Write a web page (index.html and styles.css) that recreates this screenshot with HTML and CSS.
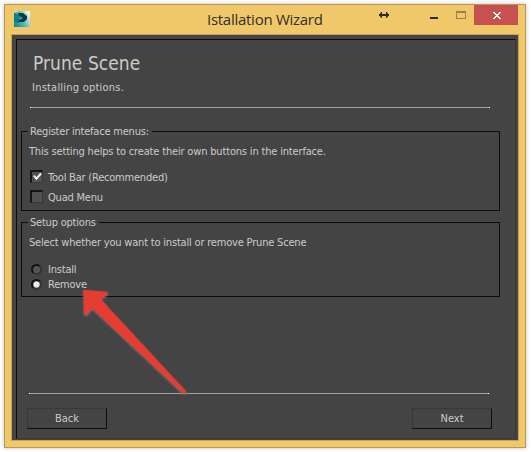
FILE: index.html
```html
<!DOCTYPE html>
<html lang="en">
<head>
<meta charset="utf-8">
<title>Istallation Wizard</title>
<link rel="stylesheet" href="styles.css">
</head>
<body>
<div class="window">
  <header class="titlebar">
    <svg class="app-icon" width="16" height="16" viewBox="0 0 16 16">
      <defs><linearGradient id="g" x1="0" y1="0.8" x2="1" y2="0.3"><stop offset="0" stop-color="#078d90"/><stop offset=".55" stop-color="#67b9ba"/><stop offset="1" stop-color="#e5f1ef"/></linearGradient></defs>
      <path fill="url(#g)" d="M0 0h16v16H0z"/>
      <path fill="#087f83" d="M0 2l5 2v8l-5-1z"/>
      <path fill="#edf6f4" d="M0 0h5L0 2zM10 0h6v5z" opacity=".7"/>
      <path fill="#073b40" d="M4 2h5l4 3v3l-3 3H5V9l4-2-4-2z"/>
      <path fill="#218d90" d="M5 5l3 1.5L5 8z"/>
    </svg>
    <h1 class="caption">Istallation Wizard</h1>
    <svg class="controls" width="148" height="20" viewBox="370 5 148 20" shape-rendering="crispEdges">
      <path fill="#c75050" d="M474 5h45v20h-45z"/>
      <path fill="#2b2b26" d="M379 14h10v2h-10zM380 13h2v4h-2zM381 12h1v6h-1zM386 13h2v4h-2zM386 12h1v6h-1zM430 17h8v2h-8z"/>
      <path fill="#9a824b" fill-rule="evenodd" d="M456 11h10v8h-10zM457 13v5h8v-5z"/>
      <path fill="#fff" d="M493 12h2v1h1v1h2v-1h1v-1h2v1h-1v1h-1v1h-1v1h1v1h1v1h1v1h-2v-1h-1v-1h-2v1h-1v1h-2v-1h1v-1h1v-1h1v-1h-1v-1h-1v-1h-1z"/>
    </svg>
  </header>
  <div class="client">
    <main class="panel">
      <h2 class="heading">Prune Scene</h2>
      <p class="subheading">Installing options.</p>
      <div class="rule"></div>
      <section class="group group-menus">
        <h3 class="legend">Register inteface menus:</h3>
        <p class="desc">This setting helps to create their own buttons in the interface.</p>
        <div class="option check-row">
          <span class="check"><svg width="9" height="9" viewBox="0 0 9 9"><path d="M1 3.7l2.4 3L8 1.5" fill="none" stroke="#f2f2f2" stroke-width="2"/></svg></span>
          <span class="label">Tool Bar (Recommended)</span>
        </div>
        <div class="option check-row"><span class="check"></span><span class="label">Quad Menu</span></div>
      </section>
      <section class="group group-setup">
        <h3 class="legend">Setup options</h3>
        <p class="desc">Select whether you want to install or remove Prune Scene</p>
        <div class="option radio-row"><span class="radio"></span><span>Install</span></div>
        <div class="option radio-row"><span class="radio selected"></span><span>Remove</span></div>
      </section>
      <footer class="footer">
        <div class="rule"></div>
        <div class="actions">
          <button class="button">Back</button>
          <button class="button">Next</button>
        </div>
      </footer>
    </main>
  </div>
  <svg class="arrow" width="110" height="112" viewBox="80 286 110 112">
    <path class="arrow-shape" d="M83.3 290.6Q83.2 289.8 84.5 289.9L106.7 291.8Q108.7 292.5 107.5 294.3L101 299.5L185.6 390.8Q186.7 393 184.9 393.8Q183.8 394 182.5 393L92.2 308.5L87.5 314.5Q85 316.2 84.2 313.5Z"/>
  </svg>
</div>
</body>
</html>
```
FILE: styles.css
```css
* { box-sizing: border-box; }
body {
  margin: 0;
  width: 531px;
  height: 452px;
  padding: 4px;
  overflow: hidden;
  background: #fff;
  color: #cbcbcb;
  font: 11px/14px "DejaVu Sans Condensed", "DejaVu Sans", sans-serif;
  letter-spacing: -.21px;
}
h1, h2, h3, p { margin: 0; font-weight: normal; white-space: nowrap; }
span { white-space: nowrap; }
.window {
  position: relative;
  width: 522px;
  height: 444px;
  padding: 0 6px 6px;
  border: 1px solid #b99a54;
  background: #f0c869;
  box-shadow: 0 0 4px rgba(0, 0, 0, .25);
}
.titlebar { display: flex; height: 29px; padding-left: 3px; }
.app-icon { margin-top: 6px; }
.caption {
  flex: 1;
  padding: 4px 0 0 177px;
  color: #30302b;
  font: 15px/20px "Open Sans", sans-serif;
  letter-spacing: -.27px;
}
.controls { flex: none; margin-right: 1px; }
.client {
  height: 407px;
  padding: 4px 2px 1px 4px;
  border: 1px solid #c2a35a;
  background: #444;
}
.panel {
  display: flex;
  flex-direction: column;
  height: 400px;
  border: 1px solid #0c0c0c;
  border-right-color: #393939;
  border-bottom-color: #393939;
}
.heading { height: 40px; padding: 10px 0 0 16px; font-size: 19px; line-height: 26px; letter-spacing: .05px; }
.subheading { height: 27px; padding: 1px 0 0 15px; letter-spacing: .22px; }
.rule {
  flex: none;
  width: 460px;
  height: 1px;
  margin-left: 13px;
  background: #a0a0a0;
  border: solid #fff;
  border-width: 0 1px;
}
.group {
  width: 479px;
  margin-left: 4px;
  border: 1px solid #0c0c0c;
}
.group-menus { height: 80px; margin-top: 23px; }
.group-setup { height: 75px; margin-top: 11px; }
.legend {
  width: fit-content;
  height: 15px;
  margin: -8px 0 0 6px;
  padding: 1px 3px 0 2px;
  background: #444;
  font-size: 11px;
}
.desc { height: 28px; padding: 6px 0 0 7px; letter-spacing: -.17px; }
.group-setup .desc { height: 32px; letter-spacing: -.19px; }
.option { display: flex; align-items: center; padding-left: 8px; }
.check-row { height: 20px; gap: 5px; }
.label { padding-top: 2px; }
.check {
  display: flex;
  width: 13px;
  height: 13px;
  margin-top: -2px;
  padding: 0 0 0 1px;
  border: 2px solid #151515;
  border-right: 1px solid #393939;
  border-bottom: 1px solid #393939;
  background: #515151;
}
.radio-row { height: 15px; gap: 5px; }
.radio {
  width: 11px;
  height: 11px;
  margin: -1px 1px 0 0;
  border: 2px solid #101010;
  border-right-color: #353535;
  border-bottom-color: #353535;
  border-radius: 50%;
  background: #555;
}
.radio { margin-left: 1px; }
.radio.selected { background: radial-gradient(circle, #eee 0 2.5px, #777 3.5px); }
.footer { height: 45px; margin-top: auto; }
.footer .rule { margin-left: 12px; }
.actions { display: flex; justify-content: space-between; width: 465px; margin: 14px 0 0 10px; }
.button {
  width: 80px;
  height: 21px;
  padding: 1px 0 0;
  border: 1px solid #383838;
  border-right-color: #0c0c0c;
  border-bottom-color: #0c0c0c;
  background: #444;
  color: inherit;
  font: inherit;
}
.arrow { position: absolute; left: 75px; top: 281px; }
.arrow-shape { fill: #e63c31; filter: drop-shadow(0 1px 1px #777); }
```
